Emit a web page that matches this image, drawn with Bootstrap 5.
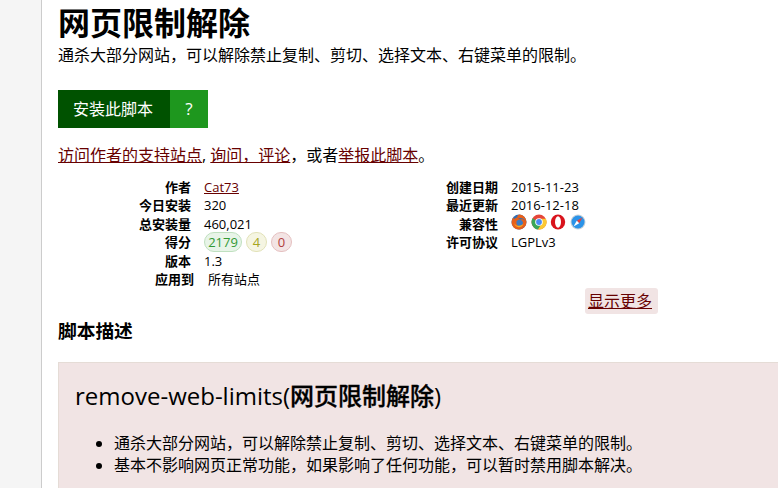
<!DOCTYPE html>
<html lang="zh">
<head>
<meta charset="utf-8">
<title>网页限制解除</title>
<link href="https://cdn.jsdelivr.net/npm/bootstrap@5.3.0/dist/css/bootstrap.min.css" rel="stylesheet">
<style>
html,body{height:488px;overflow:hidden}
body{background:#f5f5f5;font-family:"Open Sans","Noto Sans CJK SC",sans-serif;color:#000;font-size:14px}
.shell{margin-left:41px;background:#fff;border-left:1px solid #ccc;height:488px;overflow:hidden;padding-left:16px;width:737px}
a{color:#670000}
.ttl{font-size:32px;font-weight:700;line-height:36px;margin:5px 0 0}
.desc{font-size:16px;line-height:20px;margin:4px 0 0}
.inst{margin-top:25px;height:38px;width:150px}
.inst a{display:flex;align-items:center;justify-content:center;color:#fff;text-decoration:none;font-size:16px}
.inst .go{width:112px;background:#005200;padding-right:2px}
.inst .qm{width:38px;background:#1e971e;font-size:17px}
.lnk{font-size:16px;line-height:20px;margin:17px 0 0}
.meta{margin-top:13px;font-size:13px;height:108px}
.mcol{width:306px}
.mrow{height:18.4px;line-height:18.4px;align-items:center}
.mlab{width:133px;text-align:right;font-weight:700;margin-right:13px;flex:none}
.rlab{width:134px}
.app .mlab{width:136px;margin-right:14px}
.gdset{display:flex;gap:4px}
.gd{display:block;border-radius:10px;border:1px solid;height:20px;line-height:18px;font-size:13px;text-align:center}
.g1{color:#339933;border-color:#bfe0bf;background:#e8f4e8;width:38px}
.g2{color:#a6a61c;border-color:#e2e2b8;background:#f5f5e2;width:21px}
.g3{color:#b04040;border-color:#e5c0c0;background:#f3e4e4;width:21px}
.icos{gap:3.5px;margin-top:-4px}
.ico{display:block;width:16px;height:16px}
.more{background:#f1e4e4;border-radius:3px;font-size:16px;height:26px;line-height:26px;margin-left:527px;width:73px;padding-left:3px;margin-top:2px}
.hd3{font-size:18.72px;font-weight:700;line-height:24px;margin:5px 0 0}
.panel{background:#f1e4e4;border:1px solid #e5dcd6;border-right:0;margin-top:19px;padding:16px;height:140px;width:730px}
.panel h2{font-size:24px;font-weight:400;line-height:34px;margin:0 0 19px}
.panel h2 b{font-weight:500;-webkit-text-stroke:.35px #000}
.panel ul{margin:0;padding-left:39px;font-size:16px;line-height:22px}
</style>
</head>
<body>
<main class="shell">
<h1 class="ttl">网页限制解除</h1>
<p class="desc">通杀大部分网站，可以解除禁止复制、剪切、选择文本、右键菜单的限制。</p>
<div class="inst d-flex"><a class="go" href="#">安装此脚本</a><a class="qm" href="#">?</a></div>
<p class="lnk"><a href="#">访问作者的支持站点</a>, <a href="#">询问，评论</a>，或者<a href="#">举报此脚本</a>。</p>
<div class="meta d-flex">
<div class="mcol">
<div class="mrow d-flex"><span class="mlab">作者</span><a href="#">Cat73</a></div>
<div class="mrow d-flex"><span class="mlab">今日安装</span><span>320</span></div>
<div class="mrow d-flex"><span class="mlab">总安装量</span><span>460,021</span></div>
<div class="mrow d-flex"><span class="mlab">得分</span><span class="gdset"><span class="gd g1">2179</span><span class="gd g2">4</span><span class="gd g3">0</span></span></div>
<div class="mrow d-flex"><span class="mlab">版本</span><span>1.3</span></div>
<div class="mrow d-flex app"><span class="mlab">应用到</span><span>所有站点</span></div>
</div>
<div class="mcol">
<div class="mrow d-flex"><span class="mlab rlab">创建日期</span><span>2015-11-23</span></div>
<div class="mrow d-flex"><span class="mlab rlab">最近更新</span><span>2016-12-18</span></div>
<div class="mrow d-flex"><span class="mlab rlab">兼容性</span><span class="d-flex icos">
<svg class="ico" viewBox="0 0 16 16"><circle cx="8" cy="8" r="7.500" fill="#2f6fb5"/><path d="M6 7c1-1.500 3.500-1.800 5-.5 1.500 1.300 1.300 3.800-.3 5-1.800 1.300-4.200.8-5.200-1z" fill="#f7a11a"/><path d="M8.800 .6a7.500 7.500 0 1 1-8 9.700C.3 7.500 1 5 2.500 3.300c0 .9.300 1.500.7 1.800C4.200 4 5.500 3.500 6.500 3.500 5.800 2.300 7 1 8.800 .6z" fill="#e8601a"/><path d="M7 4.500c2.500-1.300 6-.5 7.200 2.500-1.200-1.300-3-2-4.700-1.500z" fill="#2f6fb5"/><path d="M5.500 7.200c1.300-1.700 4-2 5.600-.5 1.500 1.500 1 4-.8 5-2 1-4.200 0-4.800-2z" fill="#3d7cc2"/><path d="M12.500 9.500c-.3 2.500-2.500 4-5 3.800-2.400-.2-3.800-1.800-4.300-4 1 1.800 2.800 2.800 4.800 2.500 2-.2 3.500-1 4.500-2.300z" fill="#f5a623"/></svg>
<svg class="ico" viewBox="0 0 16 16"><circle cx="8" cy="8" r="7.500" fill="#e5463a"/><path d="M8 8 1.500 4.300A7.500 7.500 0 0 0 7 15.500L11 9.500z" fill="#3aa757"/><path d="M8 4.800h6.900A7.500 7.500 0 0 1 7 15.500L10.700 9.500z" fill="#fcc934"/><circle cx="8" cy="8" r="3.800" fill="#fff"/><circle cx="8" cy="8" r="2.900" fill="#4a8af4"/></svg>
<svg class="ico" viewBox="0 0 16 16"><ellipse cx="8" cy="8" rx="7.200" ry="7.600" fill="#d9131c"/><ellipse cx="8" cy="8" rx="3" ry="5.800" fill="#fff"/></svg>
<svg class="ico" viewBox="0 0 16 16"><circle cx="8" cy="8" r="7.500" fill="#c9d2d9"/><circle cx="8" cy="8" r="6.500" fill="#2b93e8"/><path d="M12.500 3.500 9.200 9.200 6.800 6.800z" fill="#e8413a"/><path d="M3.500 12.500 6.800 6.800l2.400 2.400z" fill="#fff"/></svg>
</span></div>
<div class="mrow d-flex"><span class="mlab rlab">许可协议</span><span>LGPLv3</span></div>
</div>
</div>
<div class="more"><a href="#">显示更多</a></div>
<h3 class="hd3">脚本描述</h3>
<section class="panel">
<h2>remove-web-limits(<b>网页限制解除</b>)</h2>
<ul>
<li>通杀大部分网站，可以解除禁止复制、剪切、选择文本、右键菜单的限制。</li>
<li>基本不影响网页正常功能，如果影响了任何功能，可以暂时禁用脚本解决。</li>
</ul>
</section>
</main>
<script src="https://cdn.jsdelivr.net/npm/bootstrap@5.3.0/dist/js/bootstrap.bundle.min.js"></script>
</body>
</html>
